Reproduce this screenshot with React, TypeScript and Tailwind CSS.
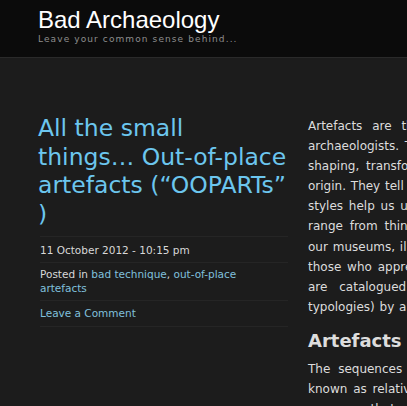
const bodyLines = [
  { t: "Artefacts are the raw material of all", ws: "[word-spacing:6px]" },
  { t: "archaeologists. They are objects that show signs of", ws: "[word-spacing:2px]" },
  { t: "shaping, transformation or use that are of human", ws: "[word-spacing:3px]" },
  { t: "origin. They tell us about the people who made them", ws: "[word-spacing:1px]" },
  { t: "styles help us understand how people lived. They", ws: "[word-spacing:2px]" },
  { t: "range from things as small as beads to the great", ws: "[word-spacing:3px]" },
  { t: "our museums, illustrating the skills of their makers", ws: "[word-spacing:1px]" },
  { t: "those who appreciate good craftsmanship. They", ws: "[word-spacing:2px]" },
  { t: "are catalogued into types (sometimes called", ws: "[word-spacing:8px]" },
  { t: "typologies) by archaeologists who study the way", ws: "[word-spacing:1px]" },
];

const lines2 = [
  { t: "The sequences of types that result are what is", ws: "[word-spacing:4px]" },
  { t: "known as relative chronologies. It is actually", ws: "[word-spacing:2px]" },
  { t: "very rare that an object is found that is out of", ws: "[word-spacing:2px]" },
];

const Line = ({ t, ws }: { t: string; ws: string }) => (
  <div className={`whitespace-nowrap ${ws}`}>{t}</div>
);

export default function App() {
  return (
    <div className="w-[407px] h-[406px] overflow-hidden bg-[#1c1c1c] font-['DejaVu_Sans',sans-serif]">
      {/* Header */}
      <header className="h-[58px] bg-[#0b0b0b] border-b border-[#2a2a2a] pl-[38px] pt-[6px]">
        <h1 className="text-[24px] leading-[27px] text-white font-['Liberation_Sans',sans-serif]">
          Bad Archaeology
        </h1>
        <p className="text-[9px] leading-[10px] tracking-[1.1px] text-[#8e8e8e] mt-[1px]">
          Leave your common sense behind...
        </p>
      </header>

      <div className="flex pl-[38px] pt-[57px]">
        {/* Post meta column */}
        <div className="w-[250px] shrink-0">
          <h2 className="text-[23.5px] leading-[28.5px] text-[#6cc6ee] font-['DejaVu_Sans',sans-serif] -mt-[1px]">
            All the small
            <br />
            things… Out-of-place
            <br />
            artefacts (“OOPARTs”
            <br />)
          </h2>
          <div className="mt-[8px] pl-[2px] text-[10.5px] text-[#d8d8d8]">
            <div className="border-t border-[#252525] pt-[6px] pb-[5px] leading-[14px]">
              11 October 2012 - 10:15 pm
            </div>
            <div className="border-t border-[#252525] pt-[4px] pb-[5px] pr-[12px] leading-[14px]">
              Posted in{" "}
              <a className="text-[#80c0dc]">bad technique</a>,{" "}
              <a className="text-[#80c0dc]">out-of-place artefacts</a>
            </div>
            <div className="border-t border-b border-[#252525] pt-[5px] pb-[6px] leading-[14px]">
              <a className="text-[#80c0dc]">Leave a Comment</a>
            </div>
          </div>
        </div>

        {/* Article body */}
        <div className="ml-[20px] w-[350px] shrink-0 text-[12px] leading-[20.1px] text-[#dcdcdc]">
          <div className="mt-[1px]">
            {bodyLines.map((l, i) => (
              <Line key={i} t={l.t} ws={l.ws} />
            ))}
          </div>
          <h3 className="mt-[13px] mb-[7px] text-[18px] leading-[22px] font-bold text-[#dddddd]">
            Artefacts out of place
          </h3>
          <div>
            {lines2.map((l, i) => (
              <Line key={i} t={l.t} ws={l.ws} />
            ))}
          </div>
        </div>
      </div>
    </div>
  );
}
